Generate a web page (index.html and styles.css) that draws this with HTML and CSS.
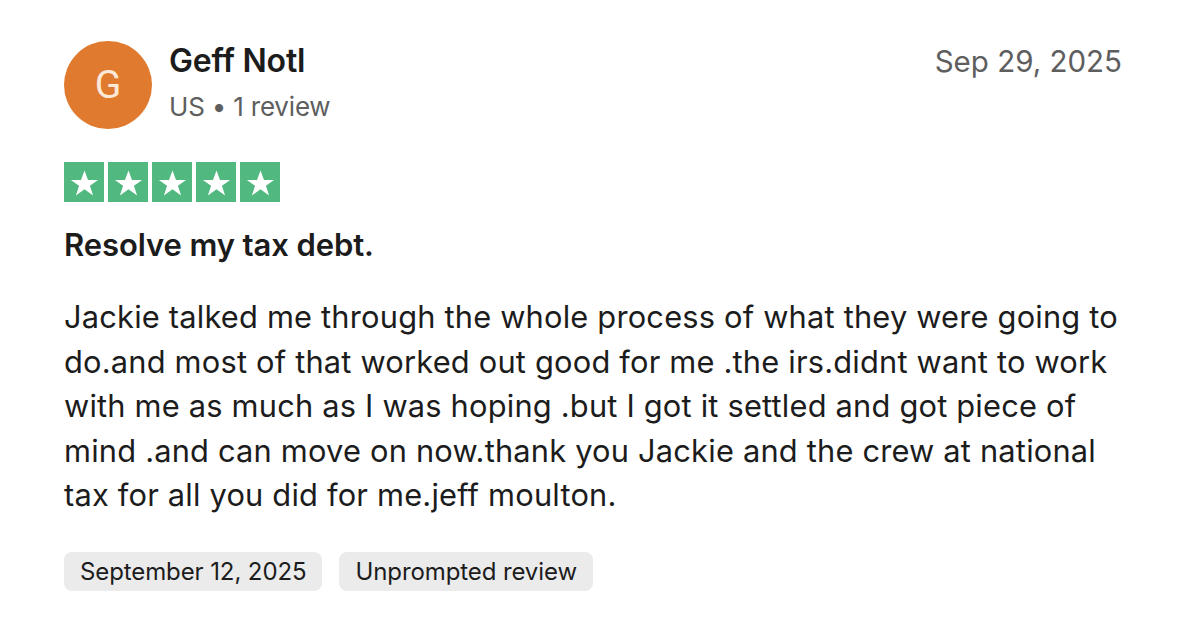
FILE: index.html
```html
<!DOCTYPE html>
<html lang="en">
<head>
<meta charset="utf-8">
<link rel="stylesheet" href="styles.css">
</head>
<body>
<article class="review">
  <header class="head">
    <div class="avatar">G</div>
    <div class="who">
      <div class="name">Geff Notl</div>
      <div class="meta">US • 1 review</div>
    </div>
    <time class="date">Sep 29, 2025</time>
  </header>
  <div class="stars">
    <span class="star"><svg viewBox="0 0 24 24"><path d="M12 3.2l2.55 6.9h7.35l-5.95 4.35 2.3 7-6.25-4.55-6.25 4.55 2.3-7L2.1 10.1h7.35z" fill="#fff"/></svg></span>
    <span class="star"><svg viewBox="0 0 24 24"><path d="M12 3.2l2.55 6.9h7.35l-5.95 4.35 2.3 7-6.25-4.55-6.25 4.55 2.3-7L2.1 10.1h7.35z" fill="#fff"/></svg></span>
    <span class="star"><svg viewBox="0 0 24 24"><path d="M12 3.2l2.55 6.9h7.35l-5.95 4.35 2.3 7-6.25-4.55-6.25 4.55 2.3-7L2.1 10.1h7.35z" fill="#fff"/></svg></span>
    <span class="star"><svg viewBox="0 0 24 24"><path d="M12 3.2l2.55 6.9h7.35l-5.95 4.35 2.3 7-6.25-4.55-6.25 4.55 2.3-7L2.1 10.1h7.35z" fill="#fff"/></svg></span>
    <span class="star"><svg viewBox="0 0 24 24"><path d="M12 3.2l2.55 6.9h7.35l-5.95 4.35 2.3 7-6.25-4.55-6.25 4.55 2.3-7L2.1 10.1h7.35z" fill="#fff"/></svg></span>
  </div>
  <h2 class="title">Resolve my tax debt.</h2>
  <p class="body">Jackie talked me through the whole process of what they were going to do.and most of that worked out good for me .the irs.didnt want to work with me as much as I was hoping .but I got it settled and got piece of mind .and can move on now.thank you Jackie and the crew at national tax for all you did for me.jeff moulton.</p>
  <div class="tags">
    <span class="tag">September 12, 2025</span>
    <span class="tag">Unprompted review</span>
  </div>
</article>
</body>
</html>
```
FILE: styles.css
```css
html, body {
  margin: 0;
  padding: 0;
  background: #fff;
}
body {
  font-family: Inter, "Helvetica Neue", Arial, sans-serif;
  color: #1c1c1c;
}
.review {
  padding: 41px 76px 0 64px;
  width: 1058px;
}
.head {
  display: flex;
  align-items: flex-start;
}
.avatar {
  width: 88px;
  height: 88px;
  border-radius: 50%;
  background: #e07a2e;
  color: #fce8d9;
  font-family: Roboto, sans-serif;
  font-size: 39px;
  line-height: 1;
  display: flex;
  align-items: center;
  justify-content: center;
  flex: none;
  font-weight: 400;
}
.who {
  margin-left: 17px;
  flex: 1;
}
.name {
  font-size: 32px;
  font-weight: 600;
  line-height: 40px;
  letter-spacing: -0.2px;
}
.meta {
  font-size: 26px;
  color: #5e5e5e;
  line-height: 34px;
  margin-top: 9px;
  letter-spacing: -0.2px;
}
.date {
  font-size: 29.5px;
  color: #5e5e5e;
  line-height: 40px;
}
.stars {
  display: flex;
  gap: 4px;
  margin-top: 33px;
}
.star {
  width: 40px;
  height: 40px;
  background: #51b87f;
  display: flex;
  align-items: center;
  justify-content: center;
}
.star svg {
  width: 33px;
  height: 33px;
}
.title {
  margin: 24px 0 0;
  font-size: 31px;
  font-weight: 600;
  line-height: 38px;
  letter-spacing: -0.1px;
}
.body {
  margin: 31px 0 0;
  font-size: 30.8px;
  line-height: 44.5px;
  letter-spacing: 0.2px;
}
.tags {
  display: flex;
  gap: 17px;
  margin-top: 34px;
}
.tag {
  background: #ebebeb;
  border-radius: 8px;
  height: 39px;
  padding: 0 16px;
  display: flex;
  align-items: center;
  font-size: 24px;
  letter-spacing: -0.1px;
  color: #1c1c1c;
}
```
